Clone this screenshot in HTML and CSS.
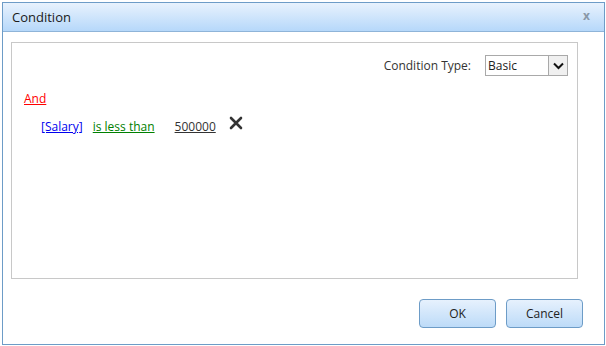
FILE: index.html
```html
<!DOCTYPE html>
<html lang="en">
<head>
    <meta charset="UTF-8">
    <title>Condition</title>
    <link rel="stylesheet" href="styles.css">
</head>
<body>
    <div class="dialog">
        <div class="titlebar">
            <span class="title">Condition</span>
            <span class="close">x</span>
        </div>
        <div class="content">
            <div class="panel">
                <div class="type-row">
                    <span class="type-label">Condition Type:</span>
                    <div class="select">
                        <span class="select-value">Basic</span>
                        <span class="select-btn">
                            <svg width="11" height="8" viewBox="0 0 11 8"><path d="M1 1.5 L5.5 6 L10 1.5" fill="none" stroke="#111" stroke-width="2"/></svg>
                        </span>
                    </div>
                </div>
                <a class="group" href="#">And</a>
                <div class="cond">
                    <a class="field" href="#">[Salary]</a>
                    <a class="op" href="#">is less than</a>
                    <a class="value" href="#">500000</a>
                    <svg class="remove" width="14" height="14" viewBox="0 0 14 14"><path d="M2 2 L12 12 M12 2 L2 12" stroke="#333" stroke-width="2.6" stroke-linecap="round"/></svg>
                </div>
            </div>
            <div class="buttons">
                <button class="btn">OK</button>
                <button class="btn">Cancel</button>
            </div>
        </div>
    </div>
</body>
</html>
```

FILE: styles.css
```css
*{
    margin: 0;
    padding: 0;
    box-sizing: border-box;
    font-family: 'Open Sans', sans-serif;
}
body{
    background: #fff;
    padding: 2px;
}
.dialog{
    width: 603px;
    height: 343px;
    border: 1px solid #6d9cc7;
    background: #fff;
    display: flex;
    flex-direction: column;
}
.titlebar{
    height: 29px;
    background: linear-gradient(#e8f2fd, #b6d8fa);
    border-bottom: 1px solid #8fb4d8;
    display: flex;
    align-items: center;
    justify-content: space-between;
    padding: 0 14px 0 9px;
}
.title{
    font-size: 13px;
    color: #1a1a1a;
}
.close{
    font-size: 12px;
    font-weight: bold;
    color: #8a98a8;
    margin-top: -3px;
}
.content{
    flex: 1;
    padding: 10px 21px 16px 8px;
    display: flex;
    flex-direction: column;
}
.panel{
    width: 567px;
    height: 237px;
    border: 1px solid #c8c8c8;
    padding: 12px 9px 0 12px;
}
.type-row{
    display: flex;
    justify-content: flex-end;
    align-items: center;
}
.type-label{
    font-size: 12px;
    color: #333;
    margin-right: 14px;
}
.select{
    width: 83px;
    height: 21px;
    border: 1px solid #a9a9a9;
    display: flex;
    align-items: center;
    justify-content: space-between;
}
.select-value{
    font-size: 12px;
    color: #222;
    padding-left: 2px;
}
.select-btn{
    width: 19px;
    height: 19px;
    border-left: 1px solid #a9a9a9;
    background: #f0f0f0;
    display: flex;
    align-items: center;
    justify-content: center;
}
.group{
    display: inline-block;
    margin-top: 14px;
    font-size: 12px;
    color: #ff0000;
}
.cond{
    display: flex;
    align-items: center;
    margin-top: 10px;
    padding-left: 17px;
}
.cond a{
    font-size: 12px;
}
.field{
    color: #0000ee;
    margin-right: 10px;
}
.op{
    color: #008000;
    margin-right: 20px;
}
.value{
    color: #333;
    margin-right: 13px;
}
.remove{
    margin-top: -8px;
}
.buttons{
    margin-top: auto;
    display: flex;
    justify-content: flex-end;
    gap: 10px;
}
.btn{
    width: 77px;
    height: 29px;
    border: 1px solid #6d9cc7;
    border-radius: 4px;
    background: linear-gradient(#e6f1fd, #bddbf8);
    font-size: 12px;
    color: #222;
}
```
